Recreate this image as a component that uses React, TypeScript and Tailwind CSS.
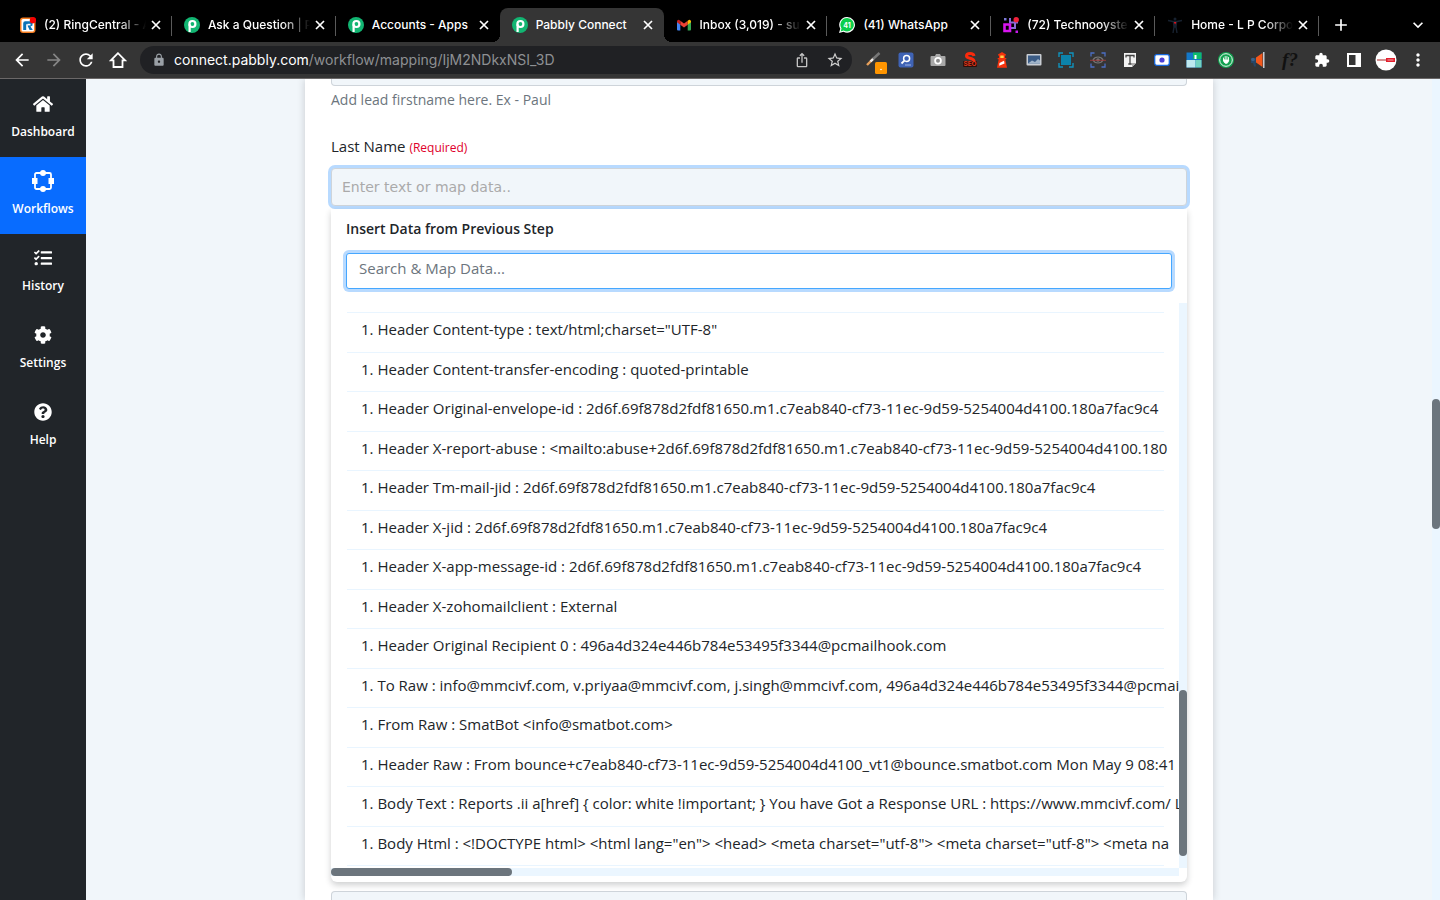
import type { ReactNode } from "react";
import { FaCog, FaHome, FaQuestionCircle, FaTasks } from "react-icons/fa";
import {
  MdAdd,
  MdArrowBack,
  MdArrowForward,
  MdExpandMore,
  MdExtension,
  MdIosShare,
  MdLock,
  MdMoreVert,
  MdRefresh,
  MdStarBorder,
} from "react-icons/md";

function RingCentralIcon() {
  return (
    <svg viewBox="0 0 16 16" className="size-4">
      <rect x="0" y="0.5" width="15.5" height="15.5" rx="3" fill="#f57c1f" />
      <rect x="1.5" y="2" width="12.5" height="12.5" rx="1.5" fill="#fff" />
      <path d="M3.2 13V6.2a2 2 0 0 1 2-2h7.3v4.3l-2 1L12.8 13H9.6L7.8 9.3V7.2H6.2V13z" fill="#0a73b7" />
      <path d="M7.5 6.8h3v1.6h-3z" fill="#fff" />
      <circle cx="13" cy="3.2" r="3.2" fill="#f40000" />
    </svg>
  );
}

function PabblyIcon() {
  return (
    <svg viewBox="0 0 16 16" className="size-4">
      <circle cx="8" cy="8" r="8" fill="#12b572" />
      <path d="M5.6 15V7.3" stroke="#fff" strokeWidth="2.2" />
      <circle cx="8.4" cy="7" r="3" fill="none" stroke="#fff" strokeWidth="2.2" />
    </svg>
  );
}

function GmailIcon() {
  return (
    <svg viewBox="0 0 16 16" className="size-4">
      <path d="M1 4.5 4.3 7v6.5H2a1 1 0 0 1-1-1z" fill="#4285f4" />
      <path d="M15 4.5 11.7 7v6.5H14a1 1 0 0 0 1-1z" fill="#34a853" />
      <path d="M4.3 3.8 8 6.6l3.7-2.8v3.9L8 10.5 4.3 7.7z" fill="#ea4335" />
      <path d="M1 4.3a1.6 1.6 0 0 1 2.6-1.1l.7.6v3.9L1 5.3z" fill="#c5221f" />
      <path d="M15 4.3a1.6 1.6 0 0 0-2.6-1.1l-.7.6v3.9L15 5.3z" fill="#fbbc04" />
    </svg>
  );
}

function WhatsAppIcon() {
  return (
    <svg viewBox="0 0 16 16" className="size-4">
      <path d="M8.2 0a7.8 7.8 0 1 1-3.7 14.7L0 16l1.3-4.3A7.8 7.8 0 0 1 8.2 0z" fill="#fff" />
      <path d="M8.2 1.1a6.7 6.7 0 1 1-3.6 12.4l-3 .9.9-2.9A6.7 6.7 0 0 1 8.2 1.1z" fill="#0bcf4b" />
      <text x="8.1" y="10.5" textAnchor="middle" fontSize="7" fontWeight="700" fontFamily="Inter, sans-serif" fill="#fff">
        41
      </text>
    </svg>
  );
}

function TechnoIcon() {
  return (
    <svg viewBox="0 0 16 16" className="size-4">
      <path d="M7 1v4.5h8M12 2v9H7" fill="none" stroke="#8a6bd8" strokeWidth="2" />
      <path d="M1.5 7.5H7V14H1.5z" fill="none" stroke="#d815f0" strokeWidth="2.6" />
      <path d="M1 1h2.5v2.5H1z" fill="#7a79d8" />
      <path d="M12.5 13.5H15V16h-2.5z" fill="#c51be8" />
      <circle cx="13.2" cy="2.8" r="2.7" fill="#f0203a" />
    </svg>
  );
}

function FigureIcon() {
  return (
    <svg viewBox="0 0 16 16" className="size-4">
      <path d="M1 3.5 6 4.5h4l5-1M8 4v6M7 10l-1 6M9 10l1 6M6.5 5l.5 5h2l.5-5" fill="none" stroke="#17212f" strokeWidth="1.4" />
      <circle cx="8" cy="2" r="1.5" fill="#17212f" />
      <path d="M6.8 5h2.6L8.1 7.5z" fill="#e3131c" />
    </svg>
  );
}

type Tab = { title: string; icon: ReactNode; active?: boolean; fade?: boolean; line?: boolean };

const tabs: Tab[] = [
  { title: "(2) RingCentral - A", icon: <RingCentralIcon />, fade: true, line: true },
  { title: "Ask a Question | P", icon: <PabblyIcon />, fade: true, line: true },
  { title: "Accounts - Apps", icon: <PabblyIcon /> },
  { title: "Pabbly Connect", icon: <PabblyIcon />, active: true },
  { title: "Inbox (3,019) - su", icon: <GmailIcon />, fade: true, line: true },
  { title: "(41) WhatsApp", icon: <WhatsAppIcon />, line: true },
  { title: "(72) Technooyste", icon: <TechnoIcon />, fade: true, line: true },
  { title: "Home - L P Corpo", icon: <FigureIcon />, fade: true, line: true },
];

function TabStrip() {
  return (
    <div className="flex h-[42px] shrink-0 bg-black pl-2 pt-2 text-white">
      <div className="flex min-w-0 flex-1">
        {tabs.map((tab, i) => (
          <div
            key={i}
            className={
              tab.active
                ? "relative flex min-w-0 flex-1 items-center rounded-t-lg bg-[#353535] pl-3 pr-2.5"
                : "relative flex min-w-0 flex-1 items-center pl-3 pr-2.5"
            }
          >
            {tab.active && (
              <>
                <span className="absolute -left-2 bottom-0 size-2 bg-[radial-gradient(circle_at_0_0,#000_8px,#353535_8px)]" />
                <span className="absolute -right-2 bottom-0 size-2 bg-[radial-gradient(circle_at_100%_0,#000_8px,#353535_8px)]" />
              </>
            )}
            {tab.icon}
            <span
              className={
                tab.fade
                  ? "ml-2 min-w-0 flex-1 overflow-hidden whitespace-nowrap text-[12px] font-medium leading-4 [mask-image:linear-gradient(to_right,black_calc(100%-32px),transparent_calc(100%-4px))]"
                  : "ml-2 min-w-0 flex-1 overflow-hidden whitespace-nowrap text-[12px] font-medium leading-4"
              }
            >
              {tab.title}
            </span>
            <button aria-label={"Close " + tab.title}>
              <svg viewBox="0 0 12 12" className="size-3" stroke="currentColor" strokeWidth="1.7">
                <path d="m2 2 8 8M10 2l-8 8" />
              </svg>
            </button>
            {tab.line && <span className="absolute right-0 top-2 h-5 w-px bg-[#5a5a5a]" />}
          </div>
        ))}
      </div>
      <div className="flex w-[121px] shrink-0 items-center justify-between pl-3 pr-3">
        <button aria-label="New tab">
          <MdAdd className="size-5" />
        </button>
        <button aria-label="Search tabs">
          <MdExpandMore className="size-5" />
        </button>
      </div>
    </div>
  );
}

const extensions: { name: string; icon: ReactNode }[] = [
  {
    name: "Color picker",
    icon: (
      <svg viewBox="0 0 24 24" className="size-6 overflow-visible">
        <path d="m5 17 6-6" stroke="#e8a15c" strokeWidth="2.4" />
        <path d="m8.5 13.5 3-3" stroke="#eee" strokeWidth="2.4" />
        <path d="m11 11 6.5-6" stroke="#777" strokeWidth="2.6" />
        <rect x="13" y="14" width="12" height="12" rx="1.5" fill="#ff9500" />
        <circle cx="19" cy="21.5" r="0.8" fill="#fff" />
      </svg>
    ),
  },
  {
    name: "Page inspector",
    icon: (
      <svg viewBox="0 0 16 16" className="size-4">
        <rect x="0.5" y="0.5" width="15" height="15" rx="2" fill="#3f63b5" />
        <circle cx="8.6" cy="6.4" r="3" fill="none" stroke="#fff" strokeWidth="1.5" />
        <path d="m6.4 8.6-2.9 2.9" stroke="#fff" strokeWidth="1.8" />
        <path d="M7 13h6" stroke="#9fb4e6" strokeWidth="1" />
      </svg>
    ),
  },
  {
    name: "Screenshot",
    icon: (
      <svg viewBox="0 0 16 16" className="size-4">
        <path d="M1.5 4H5l1-2h4l1 2h3.5a1 1 0 0 1 1 1v8a1 1 0 0 1-1 1h-13a1 1 0 0 1-1-1V5a1 1 0 0 1 1-1z" fill="#a8a8a8" />
        <circle cx="8" cy="8.8" r="3.8" fill="#fff" />
        <circle cx="8" cy="8.8" r="2" fill="#8c8c8c" />
      </svg>
    ),
  },
  {
    name: "SEO",
    icon: (
      <svg viewBox="0 0 16 16" className="size-4">
        <path d="M12 4C11.5.8 4.5.8 4.5 4c0 2.8 7.5 1.6 7.5 5 0 3.5-7 4-8 .5" fill="none" stroke="#fb2a0c" strokeWidth="3" />
        <rect x="1" y="9" width="14" height="6" rx="1" fill="#2a0f0a" />
        <text x="8" y="14.3" textAnchor="middle" fontSize="6.5" fontWeight="700" fontFamily="Inter, sans-serif" fill="#e0351a">
          SEO
        </text>
      </svg>
    ),
  },
  {
    name: "Lighthouse",
    icon: (
      <svg viewBox="0 0 16 16" className="size-4">
        <path d="M8 0 4 2.5v1h1V6H3.7v1.3h1L3 15.7h10L11.3 7.3h1V6H11V3.5h1v-1z" fill="#f4320c" />
        <path d="M6.3 3.5h3.4V6H6.3z" fill="#ffd54a" />
        <path d="m5.5 11 4.5-2.2.5 2.6-5.3 2.4z" fill="#fff" />
      </svg>
    ),
  },
  {
    name: "Screen image",
    icon: (
      <svg viewBox="0 0 16 16" className="size-4">
        <rect x="0.5" y="2" width="15" height="11.5" rx="1" fill="#c9cdd3" />
        <path d="M2 3.5h12v8H2z" fill="#3b5c86" />
        <path d="m2 11.5 4-3 3 1.5 3-3 2 1.5v3z" fill="#9fb3c8" />
      </svg>
    ),
  },
  {
    name: "Region capture",
    icon: (
      <svg viewBox="0 0 16 16" className="size-4">
        <path d="M1 5V1h4M11 1h4v4M15 11v4h-4M5 15H1v-4" fill="none" stroke="#1093bd" strokeWidth="1.4" />
        <path d="M3 3h10v10H3z" fill="#0c83ab" />
      </svg>
    ),
  },
  {
    name: "Scan",
    icon: (
      <svg viewBox="0 0 16 16" className="size-4">
        <path d="M1 4.5V1h3.5M11.5 1H15v3.5M15 11.5V15h-3.5M4.5 15H1v-3.5" fill="none" stroke="#4c6fc4" strokeWidth="1.3" />
        <path d="M3 8c2-4 8-4 10 0-2 4-8 4-10 0z" fill="none" stroke="#777" strokeWidth="1.2" />
        <circle cx="8" cy="8" r="1.8" fill="#777" />
        <path d="M0 8.3h16" stroke="#a23a3a" strokeWidth="0.9" />
      </svg>
    ),
  },
  {
    name: "Text",
    icon: (
      <svg viewBox="0 0 16 16" className="size-4">
        <path d="M2 1h12v10l-4 4H2z" fill="#f2f2f2" />
        <path d="m14 11-4 4v-4z" fill="#aaa" />
        <path d="M4 5.5V3.5h8v2M8 3.5V12M6.3 12h3.4" fill="none" stroke="#444" strokeWidth="1.3" />
      </svg>
    ),
  },
  {
    name: "Recorder",
    icon: (
      <svg viewBox="0 0 16 16" className="size-4">
        <rect x="0.7" y="2.7" width="14.6" height="10.6" rx="2" fill="#fff" stroke="#1769e0" strokeWidth="1.3" />
        <circle cx="8" cy="8" r="2.6" fill="#4a3fd6" />
      </svg>
    ),
  },
  {
    name: "Layout",
    icon: (
      <svg viewBox="0 0 16 16" className="size-4">
        <path d="M.5.5h15v15H.5z" fill="#1478c8" />
        <path d="M7 .5h8.5V7H7z" fill="#0dbb6c" />
        <path d="M.5 8h9v7.5h-9z" fill="#bfe9ef" />
        <path d="M9.5 8h6v7.5h-6z" fill="#72d3c0" />
        <path d="M8.5 3h2v4h-2z" fill="#fff" />
      </svg>
    ),
  },
  {
    name: "Blocker",
    icon: (
      <svg viewBox="0 0 16 16" className="size-4">
        <circle cx="8" cy="8" r="8" fill="#12a150" />
        <circle cx="8" cy="8" r="6.3" fill="none" stroke="#fff" strokeWidth="0.9" />
        <path d="M5.5 8.5V6M7.2 7.5V4.5M8.9 7.5V4.5M10.5 8V5.5M5.5 8c0 4.5 5.2 4.5 5.2 0L8 8z" fill="#fff" stroke="#fff" strokeWidth="0.9" strokeLinecap="round" />
      </svg>
    ),
  },
  {
    name: "Announcements",
    icon: (
      <svg viewBox="0 0 16 16" className="size-4">
        <path d="M6 5.5 12.5 1v14L6 10.5z" fill="#f4581c" />
        <path d="M13 0h1.5v16H13z" fill="#c6cbd3" />
        <path d="M1 6h5v5H1zM3 11h2.5l.5 3.5H4z" fill="#254666" />
        <circle cx="3" cy="7.5" r="1.8" fill="#3d6288" />
      </svg>
    ),
  },
  {
    name: "Font finder",
    icon: <span className="font-['Liberation_Serif',serif] text-[19px] font-bold italic leading-4 text-[#111]">f?</span>,
  },
  { name: "Extensions", icon: <MdExtension className="size-4 text-white" /> },
  {
    name: "Side panel",
    icon: (
      <svg viewBox="0 0 16 16" className="size-4">
        <path fillRule="evenodd" d="M1 1h14v14H1zM3 3v10h6.5V3z" fill="#fff" />
      </svg>
    ),
  },
  {
    name: "Profile",
    icon: (
      <svg viewBox="0 0 22 22" className="size-[22px]">
        <circle cx="11" cy="11" r="10.5" fill="#fff" />
        <path d="M2 10.2h9v1.6H2z" fill="#c77" />
        <path d="M11 9h9v4h-9z" fill="#e21f2d" />
        <path d="M12.5 11h6" stroke="#f6a5aa" strokeWidth="1" />
      </svg>
    ),
  },
  { name: "Menu", icon: <MdMoreVert className="size-5 text-white" /> },
];

function Toolbar() {
  const nav = "flex size-8 items-center justify-center text-white";
  return (
    <div className="flex h-[37px] shrink-0 items-center border-b border-[#6b6868] bg-[#353535] px-1.5">
      <button aria-label="Back" className={nav}>
        <MdArrowBack className="size-5" />
      </button>
      <button aria-label="Forward" className="flex size-8 items-center justify-center text-[#868686]">
        <MdArrowForward className="size-5" />
      </button>
      <button aria-label="Reload" className={nav}>
        <MdRefresh className="size-5" />
      </button>
      <button aria-label="Home" className={nav}>
        <svg viewBox="0 0 18 18" className="size-[18px]" fill="none" stroke="currentColor" strokeWidth="1.8">
          <path d="M9 2.2 1.9 9.3H4.5V16h9V9.3h2.6z" />
        </svg>
      </button>
      <div className="mx-1.5 flex h-7 min-w-0 flex-1 items-center rounded-full bg-[#202124] pl-3 pr-2 text-[14px] leading-5">
        <MdLock className="size-3.5 shrink-0 text-[#9aa0a6]" />
        <span className="ml-2 min-w-0 flex-1 truncate text-[#8e9093]">
          <span className="text-white">connect.pabbly.com</span>/workflow/mapping/IjM2NDkxNSI_3D
        </span>
        <button aria-label="Share" className="mr-4 text-[#c4c4c4]">
          <MdIosShare className="size-4" />
        </button>
        <button aria-label="Bookmark" className="text-[#d0d0d0]">
          <MdStarBorder className="size-[18px]" />
        </button>
      </div>
      {extensions.map((ext) => (
        <button key={ext.name} aria-label={ext.name} className="flex size-8 shrink-0 items-center justify-center">
          {ext.icon}
        </button>
      ))}
    </div>
  );
}

function WorkflowIcon() {
  return (
    <svg viewBox="0 0 22 22" className="size-[22px]" fill="currentColor">
      <rect x="3" y="3" width="16" height="16" rx="1.5" fill="none" stroke="currentColor" strokeWidth="1.8" />
      <path d="M0 8h5.5v6H0zM16.5 8H22v6h-5.5z" />
      <circle cx="11" cy="3" r="3" />
      <circle cx="11" cy="19" r="3" />
    </svg>
  );
}

const navItems: { label: string; icon: ReactNode; active?: boolean }[] = [
  { label: "Dashboard", icon: <FaHome className="size-5" /> },
  { label: "Workflows", icon: <WorkflowIcon />, active: true },
  { label: "History", icon: <FaTasks className="size-[18px]" /> },
  { label: "Settings", icon: <FaCog className="size-[18px]" /> },
  { label: "Help", icon: <FaQuestionCircle className="size-[18px]" /> },
];

function Sidebar() {
  return (
    <nav className="flex w-[86px] shrink-0 flex-col bg-[#212529] pt-px">
      {navItems.map((item) => (
        <a
          key={item.label}
          href="#"
          className={
            item.active
              ? "flex h-[77px] flex-col items-center bg-[#086cff] pt-3 text-white"
              : "flex h-[77px] flex-col items-center pt-3 text-white"
          }
        >
          <span className="flex h-6 items-center">{item.icon}</span>
          <span className="mt-2 text-[12px] font-semibold leading-4">{item.label}</span>
        </a>
      ))}
    </nav>
  );
}

const rows = [
  'Header Content-type : text/html;charset="UTF-8"',
  "Header Content-transfer-encoding : quoted-printable",
  "Header Original-envelope-id : 2d6f.69f878d2fdf81650.m1.c7eab840-cf73-11ec-9d59-5254004d4100.180a7fac9c4",
  "Header X-report-abuse : <mailto:abuse+2d6f.69f878d2fdf81650.m1.c7eab840-cf73-11ec-9d59-5254004d4100.180",
  "Header Tm-mail-jid : 2d6f.69f878d2fdf81650.m1.c7eab840-cf73-11ec-9d59-5254004d4100.180a7fac9c4",
  "Header X-jid : 2d6f.69f878d2fdf81650.m1.c7eab840-cf73-11ec-9d59-5254004d4100.180a7fac9c4",
  "Header X-app-message-id : 2d6f.69f878d2fdf81650.m1.c7eab840-cf73-11ec-9d59-5254004d4100.180a7fac9c4",
  "Header X-zohomailclient : External",
  "Header Original Recipient 0 : 496a4d324e446b784e53495f3344@pcmailhook.com",
  "To Raw : info@mmcivf.com, v.priyaa@mmcivf.com, j.singh@mmcivf.com, 496a4d324e446b784e53495f3344@pcmailh",
  "From Raw : SmatBot <info@smatbot.com>",
  "Header Raw : From bounce+c7eab840-cf73-11ec-9d59-5254004d4100_vt1@bounce.smatbot.com Mon May 9 08:41",
  "Body Text : Reports .ii a[href] { color: white !important; } You have Got a Response URL : https://www.mmcivf.com/ Lea",
  'Body Html : <!DOCTYPE html> <html lang="en"> <head> <meta charset="utf-8"> <meta charset="utf-8"> <meta na',
];

function DataMenu() {
  return (
    <div className="mt-[3px] rounded-b-md bg-white pb-1.5 pt-2 shadow-[0_3px_6px_rgba(33,37,41,0.22)]">
      <div className="px-[15px]">
        <label htmlFor="map-search" className="block text-[14px] font-semibold leading-6">
          Insert Data from Previous Step
        </label>
        <input
          id="map-search"
          type="text"
          placeholder="Search & Map Data..."
          className="mt-3 block h-9 w-full rounded-[3px] border border-[#45a7ff] bg-white px-3 pb-1.5 text-[15px] outline-none ring-3 ring-[#b8daff] placeholder:text-[#6c757d]"
        />
      </div>
      <div className="mt-3.5 grid grid-cols-[minmax(0,1fr)_8px]">
        <div className="overflow-hidden pb-0.5 pl-4 pr-[15px] pt-[9px]">
          <ul className="grid h-[554px] auto-rows-fr grid-cols-[minmax(0,1fr)] border-b border-[#e9f5ff]">
            {rows.map((row) => (
              <li key={row} className="border-t border-[#e9f5ff]">
                <button className="block whitespace-nowrap pl-3.5 pt-1 text-[15px] leading-6">1. {row}</button>
              </li>
            ))}
          </ul>
        </div>
        <div className="bg-[#ebf6ff] pt-[387px]">
          <div className="h-[166px] rounded-full bg-[#6c757d]" />
        </div>
        <div className="bg-[#ebf6ff]">
          <div className="h-2 w-[181px] rounded-full bg-[#6c757d]" />
        </div>
      </div>
    </div>
  );
}

export default function App() {
  return (
    <div className="flex h-screen flex-col overflow-hidden font-['Inter',sans-serif]">
      <TabStrip />
      <Toolbar />
      <div className="flex min-h-0 flex-1 font-['Open_Sans',sans-serif] text-[#212529]">
        <Sidebar />
        <main className="flex min-w-0 flex-1 overflow-hidden bg-[#f1f6fa]">
          <section className="mx-auto flex w-full max-w-[908px] flex-col bg-white px-[26px] shadow-[0_0_8px_rgba(33,37,41,0.2)]">
            <div className="h-[7px] shrink-0 rounded-b border border-t-0 border-[#ced4da] bg-[#f1f6fa]" />
            <p className="mt-1 text-[14px] leading-5 text-[#6c757d]">Add lead firstname here. Ex - Paul</p>
            <label htmlFor="last-name" className="mt-6 text-[15px] leading-6">
              Last Name <span className="text-[12px] text-[#e0002b]">(Required)</span>
            </label>
            <input
              id="last-name"
              type="text"
              placeholder="Enter text or map data.."
              className="mt-2 h-[38px] w-full shrink-0 rounded border border-[#ced4da] bg-[#f1f6fa] px-2.5 font-['DejaVu_Sans',sans-serif] text-[14px] outline-none ring-3 ring-[#b8daff] placeholder:text-[#aaaaaa]"
            />
            <DataMenu />
            <div className="mt-[9px] min-h-0 flex-1 rounded-t border border-b-0 border-[#ced4da] bg-[#f1f6fa]" />
          </section>
        </main>
        <div className="w-2 shrink-0 bg-[#ebf6ff] pt-80">
          <div className="h-[130px] rounded-full bg-[#6c757d]" />
        </div>
      </div>
    </div>
  );
}
